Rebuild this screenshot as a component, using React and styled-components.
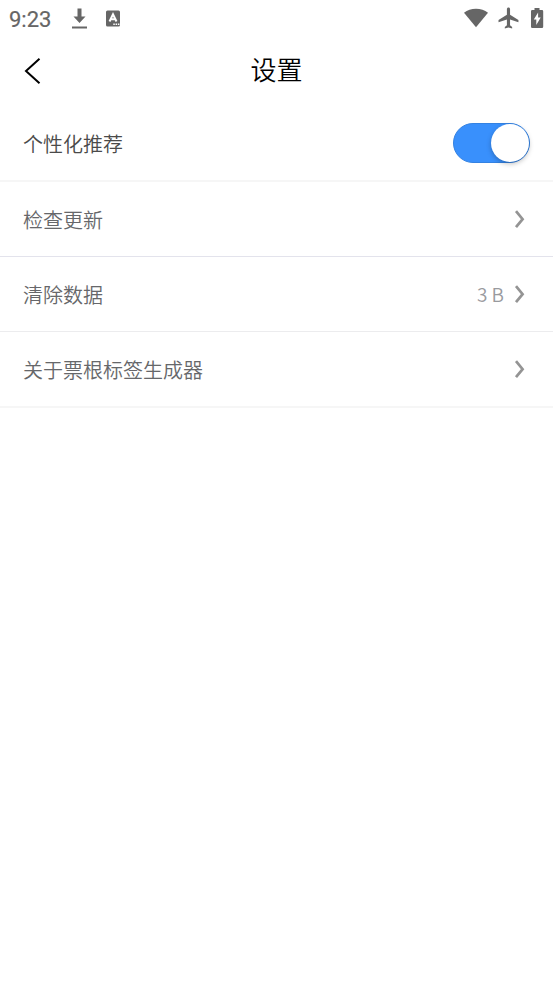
import React, { useState } from 'react';
import styled, { createGlobalStyle } from 'styled-components';

const GlobalStyle = createGlobalStyle`
  body {
    margin: 0;
    background-color: #ffffff;
    font-family: Roboto, 'Noto Sans CJK SC', sans-serif;
  }
`;

const StyledScreen = styled.div`
  min-height: 984px;
  background-color: #ffffff;
`;

const StyledStatusBar = styled.div`
  display: flex;
  align-items: center;
  height: 37px;
  padding: 0 9px 0 9px;
  color: #666666;

  svg {
    display: block;
    flex: none;
  }
`;

const StyledTime = styled.span`
  width: 62px;
  font-size: 22px;
  line-height: 37px;
  padding-top: 2px;
  -webkit-text-stroke: 0.2px #666666;
`;

const StyledNotices = styled.div`
  display: flex;
  flex: 1;
  gap: 17px;
`;

const StyledSignals = styled.div`
  display: flex;
  align-items: center;
  gap: 10px;
  padding-bottom: 1px;
`;

const StyledHeader = styled.header`
  display: grid;
  grid-template-columns: 64px 1fr 64px;
  align-items: center;
  height: 68px;
`;

const StyledBack = styled.button`
  width: 64px;
  height: 68px;
  padding: 0 0 0 24px;
  border: none;
  background: none;

  svg {
    display: block;
  }
`;

const StyledTitle = styled.h1`
  margin: 0;
  color: #000000;
  font-family: 'Noto Sans CJK SC', sans-serif;
  font-size: 26px;
  font-weight: 350;
  line-height: 38px;
  text-align: center;
  padding-bottom: 4px;
`;

const StyledRow = styled.div`
  display: flex;
  box-sizing: border-box;
  align-items: center;
  height: ${props => props.$height}px;
  padding: 0 28px 0 23px;
  border-bottom: ${props => props.$line};
`;

const StyledLabel = styled.span`
  flex: 1;
  color: ${props => props.$color || '#66676a'};
  font-family: 'Noto Sans CJK SC', sans-serif;
  font-size: 20px;
  font-weight: 350;
  line-height: 30px;
  padding-top: 2px;
`;

const StyledValue = styled.span`
  margin-right: 10px;
  color: #999a9e;
  font-family: 'Noto Sans CJK SC', sans-serif;
  font-size: 19px;
  font-weight: 350;
  line-height: 30px;
`;

const StyledSwitch = styled.button`
  display: flex;
  box-sizing: border-box;
  justify-content: ${props => (props.$on ? 'flex-end' : 'flex-start')};
  width: 77px;
  height: 40px;
  margin-right: -5px;
  padding: 0;
  border: 1px solid ${props => (props.$on ? '#3482e2' : '#dfdfdf')};
  border-radius: 20px;
  background-color: ${props => (props.$on ? '#3990fc' : '#ffffff')};
`;

const StyledKnob = styled.span`
  width: 38px;
  height: 38px;
  border-radius: 50%;
  background-color: #ffffff;
  box-shadow: 0 2px 5px rgba(0, 0, 0, 0.25);
`;

const Download = () => (
  <svg width="17" height="22" viewBox="0 0 17 22" fill="currentColor">
    <path d="M6.5 .5h4v8h4l-6 6.500-6-6.500h4zM1 18.500h15v2H1z" />
  </svg>
);

const InputMethod = () => (
  <svg width="16" height="22" viewBox="0 0 16 22">
    <rect x="1" y="2.500" width="14" height="16" rx="1.500" fill="currentColor" />
    <path
      d="M4.500 13.500 8 6.200l3.500 7.300M6 11.300h4"
      fill="none"
      stroke="#ffffff"
      strokeWidth="2"
    />
    <path d="M8.300 15.500h1.500V17H8.300zM10.600 15.500h1.500V17h-1.500zM12.900 15.500h1.500V17h-1.500z" fill="#ffffff" />
  </svg>
);

const Wifi = () => (
  <svg width="24" height="20" viewBox="0 0 24 20" fill="currentColor">
    <path d="M0 4.700C3.300 2.100 7.400.7 12 .7s8.700 1.400 12 4L12 19.200z" />
  </svg>
);

const Airplane = () => (
  <svg width="22" height="22" viewBox="1.500 1.500 21 21" fill="currentColor">
    <path d="M21 16v-2l-8-5V3.500c0-.83-.67-1.500-1.500-1.500S10 2.670 10 3.500V9l-8 5v2l8-2.500V19l-2 1.500V22l3.500-1 3.500 1v-1.500L13 19v-5.500l8 2.500z" />
  </svg>
);

const Battery = () => (
  <svg width="14" height="20" viewBox="0 0 14 20">
    <path
      d="M4.500 0h5v2h2.500q1.200 0 1.200 1.200v15.600q0 1.200-1.200 1.200H2.200Q1 20 1 18.800V3.200Q1 2 2.200 2h2.300z"
      fill="currentColor"
    />
    <path d="M8.100 4.500v5h2.600L6.300 17v-5.500H3.800z" fill="#ffffff" />
  </svg>
);

const Chevron = () => (
  <svg width="11" height="20" viewBox="0 0 11 20" fill="none">
    <path d="M2 2.200 8.600 10.200 2 18.200" stroke="#949494" strokeWidth="2.700" />
  </svg>
);

const Setting = ({ label, value, height, line }) => (
  <StyledRow $height={height} $line={line}>
    <StyledLabel>{label}</StyledLabel>
    {value && <StyledValue>{value}</StyledValue>}
    <Chevron />
  </StyledRow>
);

const App = () => {
  const [personalized, setPersonalized] = useState(true);

  return (
    <StyledScreen>
      <GlobalStyle />
      <StyledStatusBar>
        <StyledTime>9:23</StyledTime>
        <StyledNotices>
          <Download />
          <InputMethod />
        </StyledNotices>
        <StyledSignals>
          <Wifi />
          <Airplane />
          <Battery />
        </StyledSignals>
      </StyledStatusBar>
      <StyledHeader>
        <StyledBack aria-label="返回">
          <svg width="18" height="28" viewBox="0 0 18 28" fill="none">
            <path d="M15.500 1.800 2 14l13.500 12.200" stroke="#000000" strokeWidth="2" />
          </svg>
        </StyledBack>
        <StyledTitle>设置</StyledTitle>
      </StyledHeader>
      <StyledRow $height={77} $line="2px solid #f6f6f6">
        <StyledLabel $color="#4a4a4a">个性化推荐</StyledLabel>
        <StyledSwitch
          role="switch"
          aria-checked={personalized}
          $on={personalized}
          onClick={() => setPersonalized(!personalized)}
        >
          <StyledKnob />
        </StyledSwitch>
      </StyledRow>
      <Setting label="检查更新" height={75} line="1px solid #e3e3ec" />
      <Setting label="清除数据" value="3 B" height={75} line="1px solid #ececee" />
      <Setting label="关于票根标签生成器" height={76} line="2px solid #f6f6f6" />
    </StyledScreen>
  );
};

export default App;
